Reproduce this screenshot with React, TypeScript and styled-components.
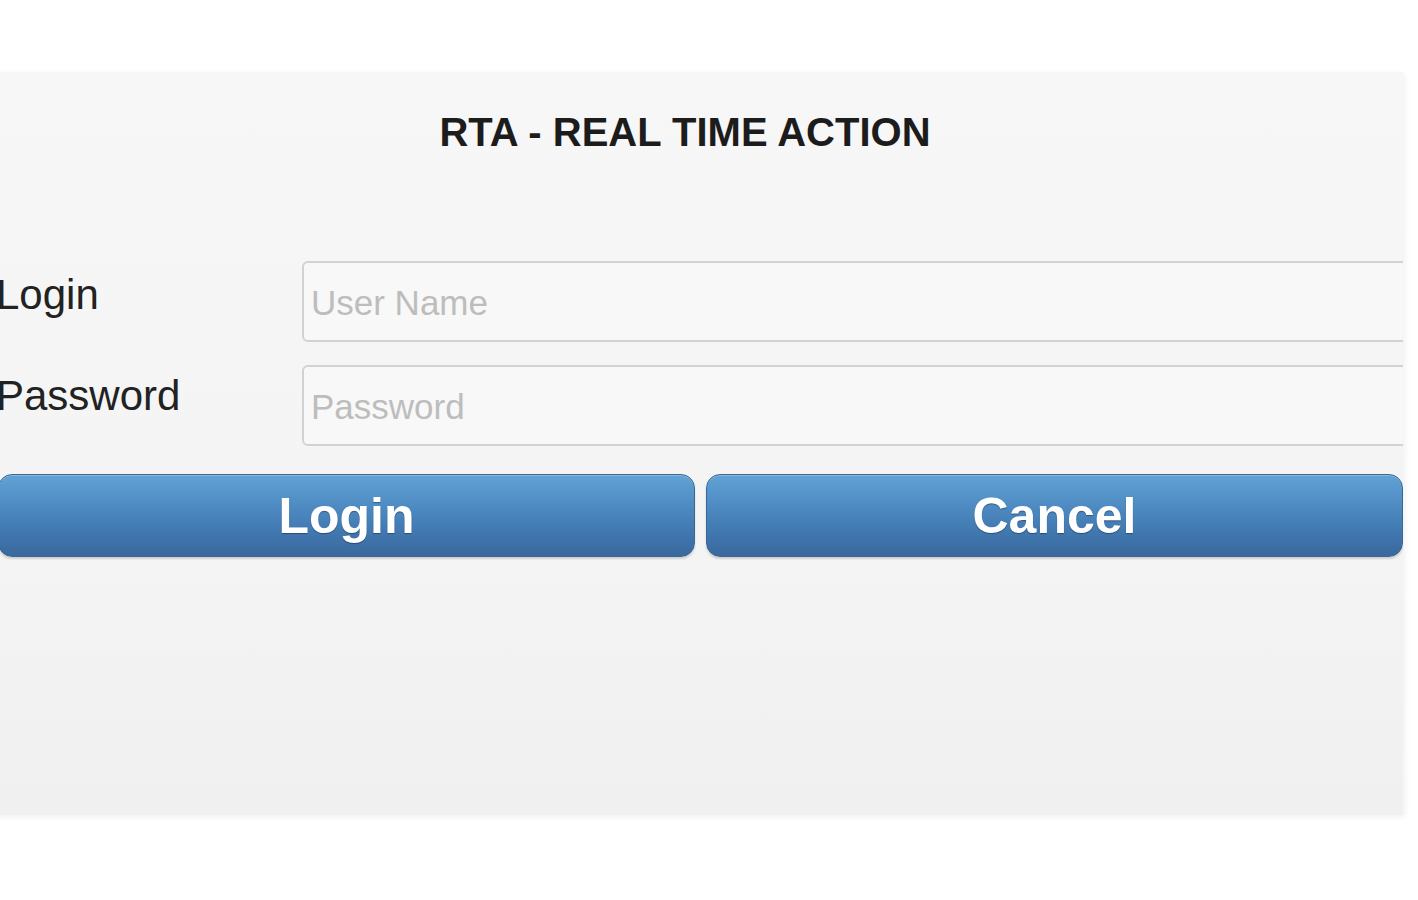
import React from "react";
import styled, { createGlobalStyle } from "styled-components";

const GlobalStyle = createGlobalStyle`
  html, body {
    margin: 0;
    padding: 0;
    background: #ffffff;
    overflow: hidden;
  }
  body {
    font-family: "Liberation Sans", Arial, sans-serif;
  }
`;

const StyledPage = styled.main`
  width: 100%;
  height: 900px;
  padding-top: 72px;
  box-sizing: border-box;
`;

const StyledPanel = styled.section`
  margin-left: -33px;
  width: 1436px;
  height: 743px;
  box-sizing: border-box;
  padding: 38px 0 0 29px;
  background: linear-gradient(to bottom, #f7f7f7 0%, #f4f4f4 60%, #f0f0f0 100%);
  box-shadow: 2px 2px 6px rgba(0, 0, 0, 0.06);
  overflow: hidden;
  display: flex;
  flex-direction: column;
`;

const StyledTitle = styled.h1`
  margin: 0 0 106px;
  font-size: 40px;
  line-height: 45px;
  font-weight: bold;
  color: #1c1c1c;
  text-align: center;
  padding-right: 29px;
`;

const StyledRow = styled.div<{ gap: number }>`
  display: flex;
  align-items: flex-start;
  margin-bottom: ${(p) => p.gap}px;
`;

const StyledLabel = styled.label<{ offset: number }>`
  width: 306px;
  flex: none;
  margin-top: ${(p) => p.offset}px;
  font-size: 42px;
  line-height: 46px;
  color: #222;
`;

const StyledInput = styled.input`
  flex: 1;
  height: 81px;
  box-sizing: border-box;
  margin-right: -10px;
  padding: 2px 0 0 7px;
  border: 2px solid #d2d2d2;
  border-radius: 6px;
  background: #f8f8f8;
  font-family: "Liberation Sans", Arial, sans-serif;
  font-size: 35px;
  color: #333;
  outline: none;
  &::placeholder {
    color: #bdbdbd;
  }
`;

const StyledButtons = styled.div`
  display: flex;
  gap: 11px;
  margin-left: 2px;
`;

const StyledButton = styled.button`
  flex: 1;
  height: 83px;
  border: 1px solid #3b6795;
  border-radius: 14px;
  background: linear-gradient(to bottom, #62a2d4 0%, #4f8dc4 35%, #4178b0 70%, #39699d 100%);
  box-shadow: inset 0 1px 0 rgba(255, 255, 255, 0.25), 0 2px 2px rgba(0, 0, 0, 0.15);
  color: #ffffff;
  font-family: "Liberation Sans", Arial, sans-serif;
  font-size: 50px;
  font-weight: bold;
  text-shadow: 0 1px 1px rgba(0, 0, 0, 0.35);
  cursor: pointer;
  padding: 0;
`;

export default () => (
  <StyledPage>
    <GlobalStyle />
    <StyledPanel>
      <StyledTitle>RTA - REAL TIME ACTION</StyledTitle>
      <StyledRow gap={23}>
        <StyledLabel offset={11}>Login</StyledLabel>
        <StyledInput type="text" placeholder="User Name" />
      </StyledRow>
      <StyledRow gap={28}>
        <StyledLabel offset={8}>Password</StyledLabel>
        <StyledInput type="password" placeholder="Password" />
      </StyledRow>
      <StyledButtons>
        <StyledButton>Login</StyledButton>
        <StyledButton>Cancel</StyledButton>
      </StyledButtons>
    </StyledPanel>
  </StyledPage>
);
